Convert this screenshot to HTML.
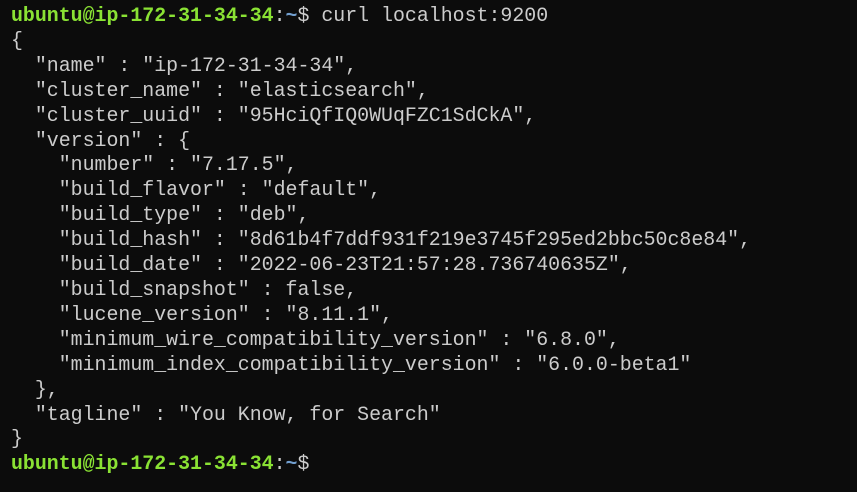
<!DOCTYPE html>
<html><head><style>
html,body{margin:0;padding:0;background:#0c0c0c;width:857px;height:492px;overflow:hidden}
pre{margin:0;position:absolute;left:11px;top:4px;font-family:"Liberation Mono",monospace;font-size:19.9px;line-height:24.9px;color:#cccccc;font-weight:normal}
.g{color:#8ae234;font-weight:bold}.b{color:#729fcf;font-weight:bold}
</style></head><body><pre><span class="g">ubuntu@ip-172-31-34-34</span>:<span class="b">~</span>$ curl localhost:9200
{
  "name" : "ip-172-31-34-34",
  "cluster_name" : "elasticsearch",
  "cluster_uuid" : "95HciQfIQ0WUqFZC1SdCkA",
  "version" : {
    "number" : "7.17.5",
    "build_flavor" : "default",
    "build_type" : "deb",
    "build_hash" : "8d61b4f7ddf931f219e3745f295ed2bbc50c8e84",
    "build_date" : "2022-06-23T21:57:28.736740635Z",
    "build_snapshot" : false,
    "lucene_version" : "8.11.1",
    "minimum_wire_compatibility_version" : "6.8.0",
    "minimum_index_compatibility_version" : "6.0.0-beta1"
  },
  "tagline" : "You Know, for Search"
}
<span class="g">ubuntu@ip-172-31-34-34</span>:<span class="b">~</span>$</pre></body></html>
